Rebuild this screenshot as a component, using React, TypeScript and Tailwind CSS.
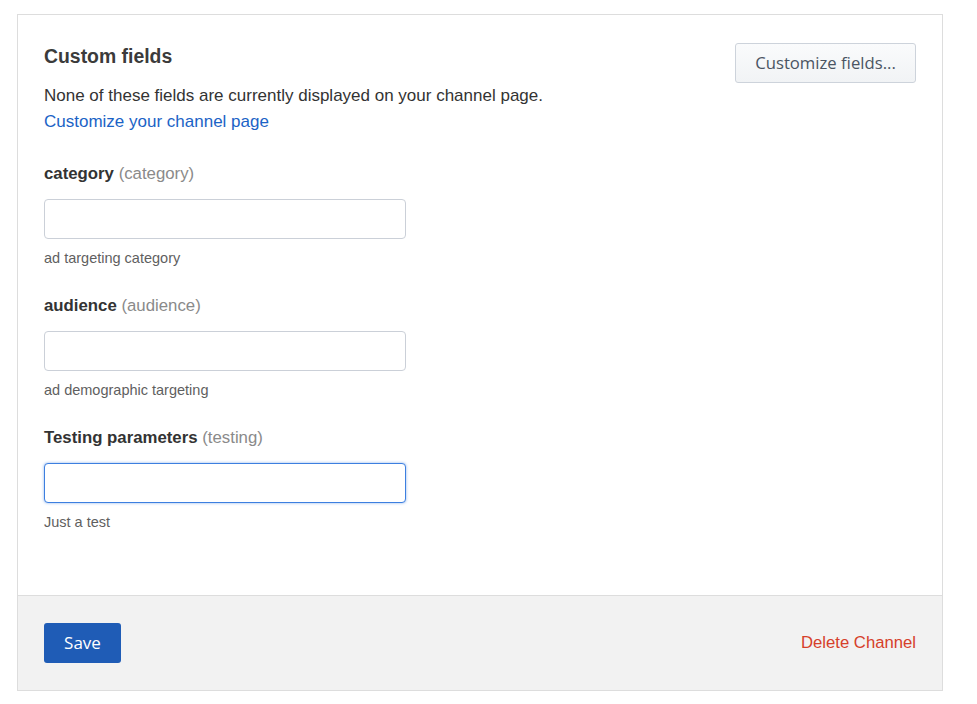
const fields = [
  { label: 'category', fieldKey: 'category', help: 'ad targeting category', focused: false },
  { label: 'audience', fieldKey: 'audience', help: 'ad demographic targeting', focused: false },
  { label: 'Testing parameters', fieldKey: 'testing', help: 'Just a test', focused: true },
];

const App = () => {
  return (
    <div className="min-h-screen bg-white pt-[14px] px-[17px] font-['Liberation_Sans',Arial,sans-serif]">
      <div className="w-[926px] border border-[#dddddd] bg-white">
        <div className="px-[26px] pt-[28px] pb-[64px]">
          {/* Header */}
          <div className="flex items-start justify-between">
            <div>
              <h2 className="mt-[1px] text-[19.4px] leading-[24px] font-bold text-[#3b3b3b]">Custom fields</h2>
              <p className="mt-[16px] text-[17px] leading-[24px] text-[#333]">
                None of these fields are currently displayed on your channel page.
              </p>
              <a href="#" className="mt-[2px] block text-[17px] leading-[24px] text-[#1b63c6]">
                Customize your channel page
              </a>
            </div>
            <button className="h-[40px] w-[181px] rounded-[3px] border border-[#cdd3db] bg-gradient-to-b from-[#fafbfc] to-[#f1f3f5] font-['Open_Sans',sans-serif] text-[16.7px] text-[#4b5563]">
              Customize fields...
            </button>
          </div>

          {/* Fields */}
          <div className="mt-[28px] flex flex-col gap-[27px]">
            {fields.map((f) => (
              <FieldRow key={f.fieldKey} {...f} />
            ))}
          </div>
        </div>

        {/* Footer */}
        <div className="flex items-center justify-between border-t border-[#dddddd] bg-[#f2f2f2] px-[26px] py-[27px]">
          <button className="h-[40px] w-[77px] rounded-[3px] bg-[#1f5cb6] font-['Open_Sans',sans-serif] text-[17px] text-white">
            Save
          </button>
          <a href="#" className="text-[16.7px] leading-[24px] text-[#d6402a]">Delete Channel</a>
        </div>
      </div>
    </div>
  );
};

// Single custom field
const FieldRow = ({ label, fieldKey, help, focused }: { label: string; fieldKey: string; help: string; focused: boolean }) => (
  <div>
    <div className="text-[16.8px] leading-[24px]">
      <span className="font-bold text-[#333]">{label}</span>{' '}
      <span className="text-[#8a8a8a]">({fieldKey})</span>
    </div>
    <input
      type="text"
      className={`mt-[13px] block h-[40px] w-[362px] rounded-[4px] border bg-white outline-none ${
        focused ? 'border-[#3d7fe0] shadow-[0_0_3px_rgba(61,127,224,0.6)]' : 'border-[#cbd0d8]'
      }`}
    />
    <div className="mt-[10px] text-[14.5px] leading-[18px] text-[#5f5f5f]">{help}</div>
  </div>
);

export default App;
